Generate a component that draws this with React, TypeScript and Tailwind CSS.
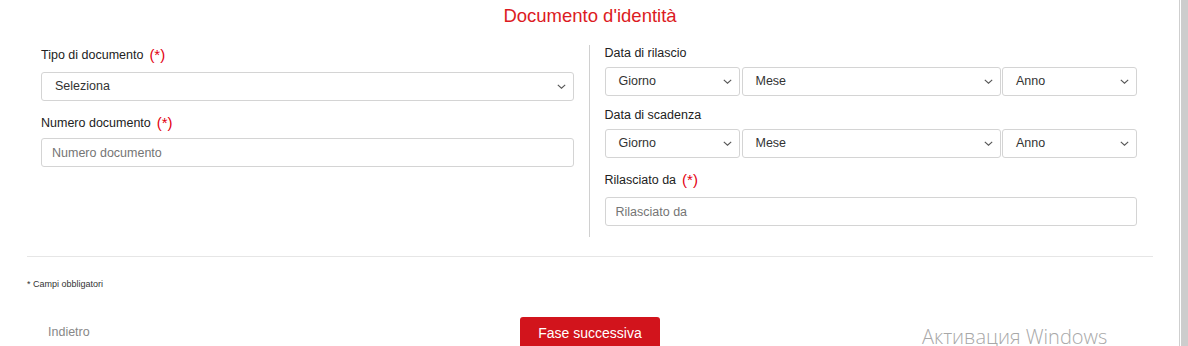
import React from 'react';

const font = { fontFamily: '"Liberation Sans", Arial, sans-serif' };

function Chevron() {
  return (
    <svg width="9" height="5" viewBox="0 0 9 5" className="shrink-0">
      <path d="M0.8 0.8l3.7 3.4 3.7-3.4" fill="none" stroke="#555" strokeWidth="1.1" />
    </svg>
  );
}

function Label({ text, required, className }: { text: string; required?: boolean; className?: string }) {
  return (
    <div className={`flex h-[20px] items-center text-[12.5px] leading-[20px] text-[#222] ${className ?? ''}`}>
      <span>{text}</span>
      {required && <span className="ml-[6px] text-[15px] leading-[20px] text-[#e3000f]">(*)</span>}
    </div>
  );
}

function SelectBox({ value, className }: { value: string; className?: string }) {
  return (
    <div
      className={`flex h-[29px] items-center justify-between rounded-[3px] border border-[#d4d4d4] bg-white pl-[13px] pr-[7px] text-[12.5px] text-[#333] ${className ?? ''}`}
    >
      <span>{value}</span>
      <Chevron />
    </div>
  );
}

function InputBox({ placeholder, className }: { placeholder: string; className?: string }) {
  return (
    <input
      placeholder={placeholder}
      className={`block h-[29px] w-full rounded-[3px] border border-[#d4d4d4] bg-white px-[10px] text-[12.5px] text-[#333] outline-none placeholder:text-[#757575] ${className ?? ''}`}
      style={font}
    />
  );
}

function DateRow({ className }: { className?: string }) {
  return (
    <div className={`flex ${className ?? ''}`}>
      <SelectBox value="Giorno" className="w-[135px]" />
      <SelectBox value="Mese" className="ml-[2px] flex-1" />
      <SelectBox value="Anno" className="ml-[1px] w-[135px]" />
    </div>
  );
}

export default function App() {
  return (
    <div className="relative flex h-[346px] w-full overflow-hidden bg-white" style={font}>
      <div className="flex-1 pl-[27px] pr-[26px]">
        {/* Title */}
        <h1 className="pt-[4px] text-center text-[18.5px] leading-[24px] text-[#dc1a22]">Documento d'identità</h1>

        {/* Form */}
        <div className="mt-[15px] flex pl-[14px] pr-[16px]">
          <div className="flex-1 pt-[2px]">
            <Label text="Tipo di documento" required />
            <SelectBox value="Seleziona" className="mt-[7px]" />
            <Label text="Numero documento" required className="mt-[12px]" />
            <InputBox placeholder="Numero documento" className="mt-[5px]" />
          </div>
          <div className="mx-[15px] mt-[2px] w-px bg-[#d0d0d0]" />
          <div className="flex-1 pb-[11px]">
            <Label text="Data di rilascio" />
            <DateRow className="mt-[4px]" />
            <Label text="Data di scadenza" className="mt-[9px]" />
            <DateRow className="mt-[4px]" />
            <Label text="Rilasciato da" required className="mt-[12px]" />
            <InputBox placeholder="Rilasciato da" className="mt-[7px]" />
          </div>
        </div>

        <div className="mt-[19px] h-px bg-[#e6e6e6]" />

        <p className="mt-[21px] text-[9px] leading-[12px] text-[#333]">* Campi obbligatori</p>

        {/* Footer */}
        <div className="mt-[27px] grid grid-cols-3 items-start">
          <button className="justify-self-start pl-[21px] pt-[6px] text-[12.5px] leading-[18px] text-[#888]">Indietro</button>
          <button className="justify-self-center rounded-t-[3px] bg-[#d2141c] px-[18px] pb-[11px] pt-[7px] text-[14px] leading-[18px] text-white">
            Fase successiva
          </button>
          <div />
        </div>
      </div>

      {/* Scrollbar strip */}
      <div className="flex w-[9px] shrink-0 border-l border-[#cfcfcf]">
        <div className="ml-px flex-1 bg-[#cdcdcd]" />
      </div>

      {/* Windows watermark */}
      <div
        className="pointer-events-none absolute left-[922px] top-[327px] text-[20px] leading-[20px] text-[#a8a8a8]"
        style={{ fontFamily: '"Open Sans", "Liberation Sans", sans-serif', fontWeight: 300 }}
      >
        Активация Windows
      </div>
    </div>
  );
}
